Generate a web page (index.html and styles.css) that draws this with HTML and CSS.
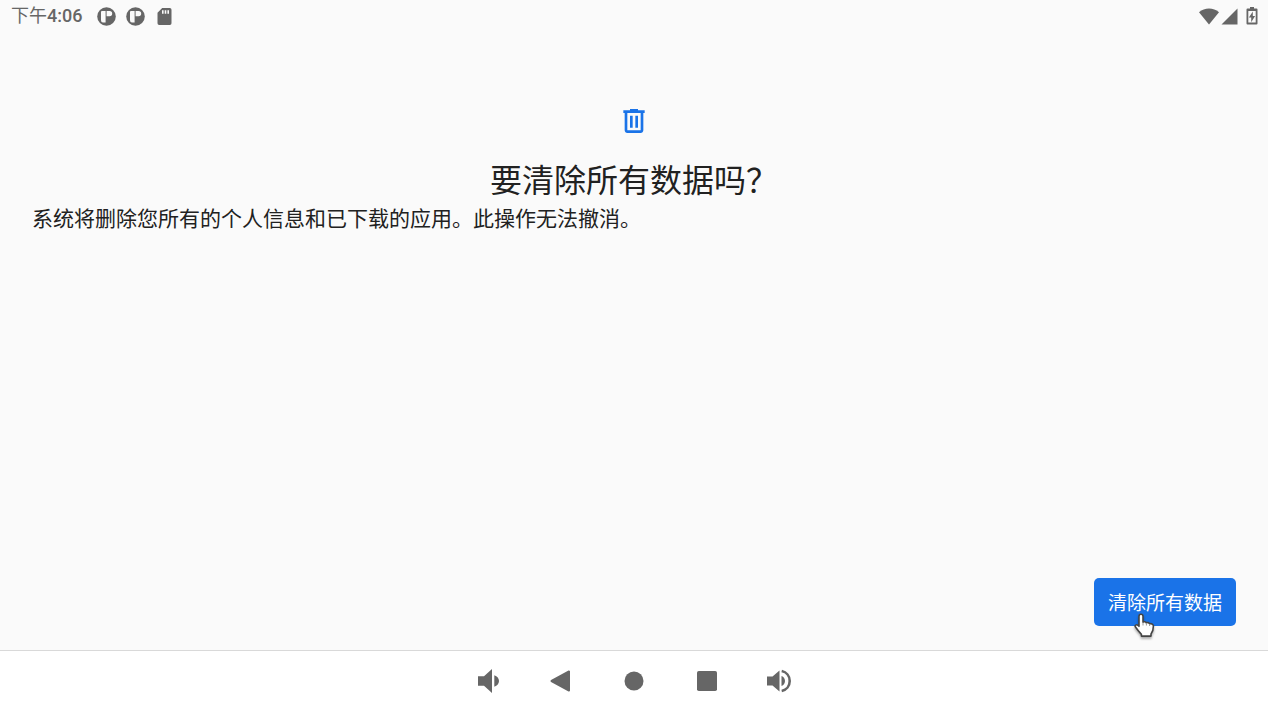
FILE: index.html
```html
<!DOCTYPE html>
<html lang="zh-CN">
<head>
  <meta charset="UTF-8" />
  <meta name="viewport" content="width=device-width, initial-scale=1.0" />
  <title>清除所有数据</title>
  <link rel="stylesheet" href="styles.css">
</head>
<body>
  <header class="status-bar">
    <div class="status-left">
      <span class="clock">下午<span class="digits">4:06</span></span>
      <svg class="notice" width="19" height="19" viewBox="0 0 19 19">
        <circle cx="9.5" cy="9.5" r="9.3" fill="#666"/>
        <path d="M5 4h3.600v11.500H6.400A2.200 2.200 0 0 1 4 13.300V5a1 1 0 0 1 1-1zM9.600 4h3a2.600 2.600 0 0 1 0 5.200h-3z" fill="#fafafa"/>
      </svg>
      <svg class="notice" width="19" height="19" viewBox="0 0 19 19">
        <circle cx="9.5" cy="9.5" r="9.3" fill="#666"/>
        <path d="M5 4h3.600v11.500H6.400A2.200 2.200 0 0 1 4 13.300V5a1 1 0 0 1 1-1zM9.600 4h3a2.600 2.600 0 0 1 0 5.200h-3z" fill="#fafafa"/>
      </svg>
      <svg class="notice" width="19" height="19" viewBox="0 0 19 19">
        <path d="M7.200 1h7.600a1.700 1.700 0 0 1 1.700 1.700v13.600a1.700 1.700 0 0 1-1.700 1.700H4.200a1.700 1.700 0 0 1-1.700-1.700V5.700z" fill="#666"/>
        <path d="M7 3.300h1.600v3.400H7zM9.700 3.300h1.600v3.400H9.700zM12.400 3.300H14v3.400h-1.600z" fill="#fafafa"/>
      </svg>
    </div>
    <div class="status-right">
      <svg width="20" height="17" viewBox="0 0 20 17">
        <path d="M0 4.200C2.900 1.800 6.300.6 10 .6s7.100 1.200 10 3.600L10 16.600z" fill="#666"/>
      </svg>
      <svg width="17" height="17" viewBox="0 0 17 17">
        <path d="M16.500.5v16H.5z" fill="#666"/>
      </svg>
      <svg class="battery" width="12" height="18" viewBox="0 0 12 18">
        <path d="M4 0h4v1.600h2.500a1 1 0 0 1 1 1v14a1 1 0 0 1-1 1h-9a1 1 0 0 1-1-1v-14a1 1 0 0 1 1-1H4zM2.300 4v11.400h7.400V4z" fill="#666" fill-rule="evenodd"/>
        <path d="M6.800 4.400 2.900 10.600h2.300v4.600l3.900-6.200H6.800z" fill="#666"/>
      </svg>
    </div>
  </header>

  <main class="content">
    <svg class="trash" width="32" height="32" viewBox="0 0 24 24">
      <path d="M15 4V3H9v1H4v2h1v13c0 1.100.9 2 2 2h10c1.100 0 2-.9 2-2V6h1V4h-5zm2 15H7V6h10v13zM9 8h2v9H9zm4 0h2v9h-2z" fill="#1a73e8"/>
    </svg>
    <h1>要清除所有数据吗？</h1>
    <p>系统将删除您所有的个人信息和已下载的应用。此操作无法撤消。</p>
    <div class="actions">
      <button class="erase">清除所有数据
        <svg class="pointer" width="26" height="28" viewBox="0 0 26 28">
          <path d="M9 2.200c1.300 0 2 .9 2 2.100v6c.5-.8 3-.7 3.400.7.700-.8 2.800-.5 3.200.9 1.300-.7 3.800 0 3.800 2.100 0 3.200-.6 5.800-2.400 8.100v2H9.400v-1.700C7.200 20 5 17.300 3.300 14.800c-.8-1.300 1.200-2.700 2.700-1.500l1 1V4.300c0-1.200.8-2.100 2-2.100z" fill="#fff" stroke="#444" stroke-width="1.600" stroke-linejoin="round"/>
          <path d="M11 10.500v3M14.400 11v2.500M17.600 12v2" stroke="#999" stroke-width="1"/>
        </svg>
      </button>
    </div>
  </main>

  <nav class="nav-bar">
    <button aria-label="降低音量">
      <svg width="32" height="32" viewBox="0 0 32 32">
        <path d="M6 11.300h6L20 4v24l-8-7.300H6zM22.300 10.300c3 1 4.700 3.200 4.700 5.700s-1.700 4.700-4.700 5.700z" fill="#666"/>
      </svg>
    </button>
    <button aria-label="返回">
      <svg width="32" height="32" viewBox="0 0 32 32">
        <path d="M24 6.500v19L6.500 16z" fill="#666" stroke="#666" stroke-width="2" stroke-linejoin="round"/>
      </svg>
    </button>
    <button aria-label="主屏幕">
      <svg width="32" height="32" viewBox="0 0 32 32">
        <circle cx="16" cy="16" r="9.500" fill="#666"/>
      </svg>
    </button>
    <button aria-label="概览">
      <svg width="32" height="32" viewBox="0 0 32 32">
        <rect x="6" y="6" width="20" height="20" rx="1.800" fill="#666"/>
      </svg>
    </button>
    <button aria-label="提高音量">
      <svg width="32" height="32" viewBox="0 0 32 32">
        <path d="M3 11.500h5.500L15.500 5.500v21L8.500 20.500H3zM17.500 11c2.300.8 3.500 2.800 3.500 5s-1.200 4.200-3.500 5z" fill="#666"/>
        <path d="M17.700 6c4.700 1 8 5 8 10s-3.300 9-8 10" fill="none" stroke="#666" stroke-width="2.600"/>
      </svg>
    </button>
  </nav>
</body>
</html>
```

FILE: styles.css
```css
* {
  box-sizing: border-box;
}
body {
  margin: 0;
  min-height: 100vh;
  display: flex;
  flex-direction: column;
  background: #fafafa;
  color: #212121;
  font-family: Roboto, "Noto Sans CJK SC", sans-serif;
}
svg {
  display: block;
}
.status-bar {
  display: flex;
  justify-content: space-between;
  align-items: center;
  height: 32px;
  padding: 0 10px 0 11px;
}
.status-left {
  display: flex;
  align-items: center;
  gap: 10px;
}
.clock {
  margin-right: 5px;
  color: #666;
  font-size: 18px;
  line-height: 32px;
}
.digits {
  font-weight: 500;
}
.status-right {
  display: flex;
  align-items: center;
  gap: 2px;
}
.battery {
  margin-left: 6px;
}
.content {
  flex: 1;
  display: flex;
  flex-direction: column;
  padding: 73px 32px 24px;
}
.trash {
  align-self: center;
}
h1 {
  margin: 22px 0 0;
  font-size: 32px;
  font-weight: 400;
  line-height: 44px;
  text-align: center;
}
p {
  margin: 0;
  font-size: 21px;
  line-height: 32px;
}
.actions {
  display: flex;
  justify-content: flex-end;
  margin-top: auto;
}
button {
  border: none;
  font-family: inherit;
  cursor: pointer;
}
.erase {
  position: relative;
  height: 48px;
  padding: 0 14px 2px;
  background: #1a73e8;
  border-radius: 5px;
  color: #fff;
  font-size: 19px;
}
.pointer {
  position: absolute;
  left: 38px;
  top: 34px;
  filter: drop-shadow(0 2px 1px rgba(0,0,0,0.3));
}
.nav-bar {
  display: flex;
  justify-content: center;
  align-items: center;
  gap: 41px;
  height: 63px;
  padding-bottom: 2px;
  background: #fff;
  border-top: 1px solid #d9d9d9;
}
.nav-bar button {
  padding: 0;
  background: none;
}
```
